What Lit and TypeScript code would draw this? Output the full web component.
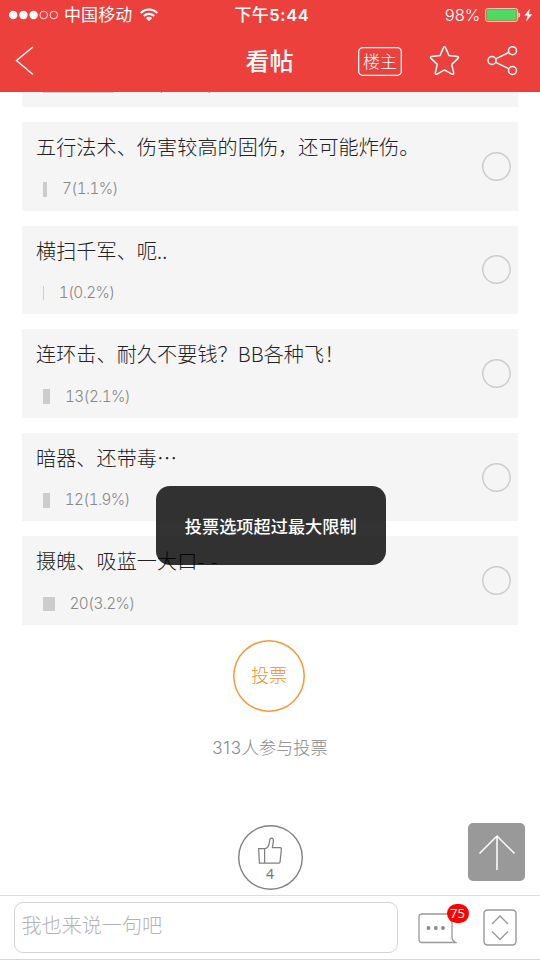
import { LitElement, html, css } from "lit";
import { customElement } from "lit/decorators.js";

interface Option {
  title: string;
  votes: string;
  bar: number;
}

const options: Option[] = [
  { title: "", votes: "123(19.8%)", bar: 71 },
  { title: "五行法术、伤害较高的固伤，还可能炸伤。", votes: "7(1.1%)", bar: 4 },
  { title: "横扫千军、呃..", votes: "1(0.2%)", bar: 0.7 },
  { title: "连环击、耐久不要钱？BB各种飞！", votes: "13(2.1%)", bar: 7 },
  { title: "暗器、还带毒⋯", votes: "12(1.9%)", bar: 6.7 },
  { title: "摄魄、吸蓝一大口- -", votes: "20(3.2%)", bar: 11.5 },
];

@customElement("app-root")
export class AppRoot extends LitElement {
  static styles = css`
    :host {
      display: flex;
      flex-direction: column;
      position: relative;
      width: 540px;
      height: 960px;
      overflow: hidden;
      background: #fff;
      font-family: "Noto Sans CJK SC", sans-serif;
      box-sizing: border-box;
    }
    * { box-sizing: border-box; }
    svg { display: block; flex: none; fill: none; }
    header { background: #ec403c; color: #fff; height: 92px; flex: none; }
    .status {
      display: grid;
      grid-template-columns: 1fr auto 1fr;
      align-items: center;
      height: 30px;
      padding: 0 7px 0 9px;
      font-size: 17px;
      line-height: 28px;
    }
    .side { display: flex; align-items: center; }
    .carrier { margin: 0 8px 0 6px; letter-spacing: 0.1px; height: 30px; }
    .time { font-size: 17px; font-weight: 500; letter-spacing: 0.35px; display: flex; height: 30px; padding-left: 2px; }
    .digits { font-family: Inter, sans-serif; font-weight: 600; font-size: 16.5px; letter-spacing: 0.7px; line-height: 30px; }
    .right { justify-content: flex-end; }
    .percent { font-family: Inter, sans-serif; font-size: 16.5px; line-height: 30px; margin-right: 5px; font-weight: 300; letter-spacing: -0.1px; }
    nav {
      display: grid;
      grid-template-columns: 1fr auto 1fr;
      align-items: center;
      height: 62px;
      padding: 0 22px 0 15px;
    }
    .heading { font-size: 24px; line-height: 30px; font-weight: 500; height: 32px; margin-left: 6px; }
    .tools { display: flex; align-items: center; justify-content: flex-end; }
    .owner {
      width: 44px;
      height: 29px;
      box-shadow: inset 0 0 0 1.3px #fff;
      border-radius: 5px;
      font-size: 17px;
      font-weight: 300;
      line-height: 28px;
      text-align: center;
    }
    .star { margin-left: 27px; }
    .share { margin-left: 27px; }
    main { flex: 1; min-height: 0; overflow: hidden; }
    .list {
      display: flex;
      flex-direction: column;
      gap: 14.9px;
      margin-top: -73.6px;
      padding: 0 22px;
    }
    .card {
      display: flex;
      align-items: center;
      justify-content: space-between;
      flex: none;
      height: 88.7px;
      background: #f5f5f5;
      padding: 0 7px 0 14px;
    }
    .body { height: 100%; padding-top: 10px; }
    .title {
      font-size: 20.1px;
      line-height: 30px;
      height: 30px;
      font-weight: 300;
      color: #222;
      white-space: nowrap;
      letter-spacing: 0.08px;
      word-spacing: 2px;
    }
    .result { display: flex; align-items: center; height: 15px; margin-top: 20px; padding-left: 7px; }
    .bar { height: 14.6px; background: #ccc; }
    .votes {
      margin-left: 15px;
      margin-top: -1px;
      font-family: Inter, sans-serif;
      font-weight: 300;
      font-size: 15.3px;
      font-variant-numeric: tabular-nums;
      letter-spacing: -0.6px;
      line-height: 15px;
      color: #888;
    }
    .radio { width: 29px; height: 29px; box-shadow: inset 0 0 0 1.5px #ccc; border-radius: 50%; }
    .vote {
      width: 72px;
      height: 72px;
      margin: 15px 0 0 233px;
      box-shadow: inset 0 0 0 1.5px #f39838;
      border-radius: 50%;
      color: #f08c28;
      font-size: 18px;
      font-weight: 300;
      line-height: 69px;
      text-align: center;
    }
    .total {
      margin-top: 23px;
      height: 25px;
      line-height: 24px;
      text-align: center;
      color: #888;
      font-size: 17.2px;
      font-weight: 300;
    }
    .num { font-family: Inter, sans-serif; font-weight: 300; font-size: 17px; letter-spacing: 0.7px; }
    .like {
      display: flex;
      flex-direction: column;
      align-items: center;
      width: 65px;
      height: 65px;
      margin: 65px auto 0;
      padding-top: 12px;
      box-shadow: inset 0 0 0 1.4px #808080;
      border-radius: 50%;
      color: #777;
      font-size: 14px;
      line-height: 20px;
      font-family: "Noto Sans", sans-serif;
    }
    footer {
      display: flex;
      align-items: center;
      flex: none;
      height: 65px;
      padding: 0 23px 0 14px;
      border-top: 1px solid #ddd;
      border-bottom: 1px solid #d8d8d8;
      background: #fff;
    }
    .input {
      width: 384px;
      height: 51px;
      border: 1px solid #d4d4d4;
      border-radius: 9px;
      padding-left: 6.5px;
      font-size: 20.1px;
      font-weight: 300;
      line-height: 44px;
      color: #b4b4b4;
    }
    .comments { position: relative; margin-left: 20px; margin-top: 1px; }
    .badge {
      position: absolute;
      left: 28.5px;
      top: -9px;
      width: 22px;
      height: 19px;
      border-radius: 10px;
      background: #f00;
      color: #fff;
      font: 13px/19px "Noto Sans", sans-serif;
      text-align: center;
    }
    .pager { margin-left: 26px; }
    .toast {
      position: absolute;
      left: 155.5px;
      top: 486.3px;
      width: 230.5px;
      height: 78.5px;
      border-radius: 14px;
      background: rgba(0, 0, 0, 0.8);
      color: #fff;
      font-size: 17.2px;
      font-weight: 500;
      line-height: 79px;
      text-align: center;
    }
    .top {
      position: absolute;
      left: 467.7px;
      top: 823px;
      width: 57.7px;
      height: 58px;
      border-radius: 5px;
      background: #999;
    }
  `;

  private card(o: Option) {
    return html`<div class="card">
      <div class="body">
        <div class="title">${o.title}</div>
        <div class="result">
          <div class="bar" style="width:${o.bar}px"></div>
          <span class="votes">${o.votes}</span>
        </div>
      </div>
      <div class="radio"></div>
    </div>`;
  }

  render() {
    return html`
      <header>
        <div class="status">
          <div class="side">
            <svg width="49" height="10" viewBox="0 0 49 10" stroke="#fff">
              <g fill="#fff" stroke="none">
                <circle cx="4.2" cy="5" r="4.2" /><circle cx="14.4" cy="5" r="4.2" /><circle cx="24.6" cy="5" r="4.2" />
              </g>
              <circle cx="34.7" cy="5" r="3.8" stroke-width=".8" /><circle cx="44.8" cy="5" r="3.8" stroke-width=".8" />
            </svg>
            <span class="carrier">中国移动</span>
            <svg width="18" height="14" viewBox="0 0 18 14" stroke="#fff" stroke-width="2.1">
              <path d="M.8 4.9a11.6 11.6 0 0 1 16.4 0M3.8 8a7.4 7.4 0 0 1 10.4 0" />
              <path d="M9 13.2 5.9 10.1a4.4 4.4 0 0 1 6.2 0z" fill="#fff" stroke="none" />
            </svg>
          </div>
          <div class="time"><span>下午</span><span class="digits">5:44</span></div>
          <div class="side right">
            <span class="percent">98%</span>
            <svg width="48" height="14" viewBox="0 0 48 14">
              <rect x=".6" y=".6" width="32" height="12.8" rx="2" stroke="#f6cfc2" stroke-width="1" />
              <rect x="1.6" y="1.6" width="30" height="10.8" rx="1" fill="#4cd964" />
              <path d="M33.5 4.5c2.2.5 2.2 4.5 0 5z" fill="#fff" />
              <path d="m45 .6-5.6 7h3.2l-1.4 5.8 6-7.2h-3.3z" fill="#fff" />
            </svg>
          </div>
        </div>
        <nav>
          <svg width="20" height="30" viewBox="0 0 20 30" stroke="#fff" stroke-width="1.4">
            <path d="M18 1 1.5 14.5 18 28.5" />
          </svg>
          <div class="heading">看帖</div>
          <div class="tools">
            <div class="owner">楼主</div>
            <svg class="star" width="31" height="30" viewBox="0 0 31 30" stroke="#fff" stroke-width="1.5" stroke-linejoin="round">
              <path d="M14.5 1.6q1-1.6 2 0l3.5 8 8.3.8q2 .4.7 2l-6.3 6 2 8.3q.1 2.1-1.8 1.4l-7.4-4.2-7.4 4.2q-1.9.7-1.8-1.4l2-8.3-6.3-6q-1.3-1.6.7-2l8.3-.8z" />
            </svg>
            <svg class="share" width="31" height="30" viewBox="0 0 31 30" stroke="#fff" stroke-width="1.5">
              <circle cx="5" cy="14.5" r="4" /><circle cx="25.5" cy="4.7" r="4" /><circle cx="25.5" cy="24.5" r="4" />
              <path d="m8.7 12.8 13-6.3M8.7 16.3l13 6.3" />
            </svg>
          </div>
        </nav>
      </header>
      <main>
        <div class="list">${options.map((o) => this.card(o))}</div>
        <div class="vote">投票</div>
        <div class="total"><span class="num">313</span>人参与投票</div>
        <div class="like">
          <svg width="26" height="27" viewBox="0 0 26 28" stroke="#808080" stroke-width="1.3" stroke-linejoin="round">
            <path d="M1.2 12h6.2v15.2H2zM7.4 12c3 0 4.8-4 5.2-8 .4-3.8 4-3.8 3.9.3L15.5 11h8q1.4 0 1.3 1.5L23.4 26q-.2 1.2-1.5 1.2H7.4" />
          </svg>
          <span>4</span>
        </div>
      </main>
      <footer>
        <div class="input">我也来说一句吧</div>
        <div class="comments">
          <svg width="39" height="31" viewBox="0 0 39 31" stroke="#999" stroke-width="1.3">
            <path d="M37.6 29.5H4q-3 0-3-3V4q0-3 3-3h27q3 0 3 3v20.5q0 3 3.6 5z" />
            <g fill="#888" stroke="none"><circle cx="10.5" cy="15" r="1.9" /><circle cx="17.8" cy="15" r="1.9" /><circle cx="25" cy="15" r="1.9" /></g>
          </svg>
          <span class="badge">75</span>
        </div>
        <svg class="pager" width="34" height="37" viewBox="0 0 34 37" stroke="#999" stroke-width="1.4">
          <rect x="1" y="1" width="32" height="35" rx="3.5" />
          <path d="m9 15 8-8 8 8M9 22.5l8 8 8-8" />
        </svg>
      </footer>
      <div class="top">
        <svg width="58" height="58" viewBox="0 0 58 58" stroke="#fff" stroke-width="1.5">
          <path d="M29 13v34M11.5 30.5 29 13 46.5 30.5" />
        </svg>
      </div>
      <div class="toast">投票选项超过最大限制</div>
    `;
  }
}
